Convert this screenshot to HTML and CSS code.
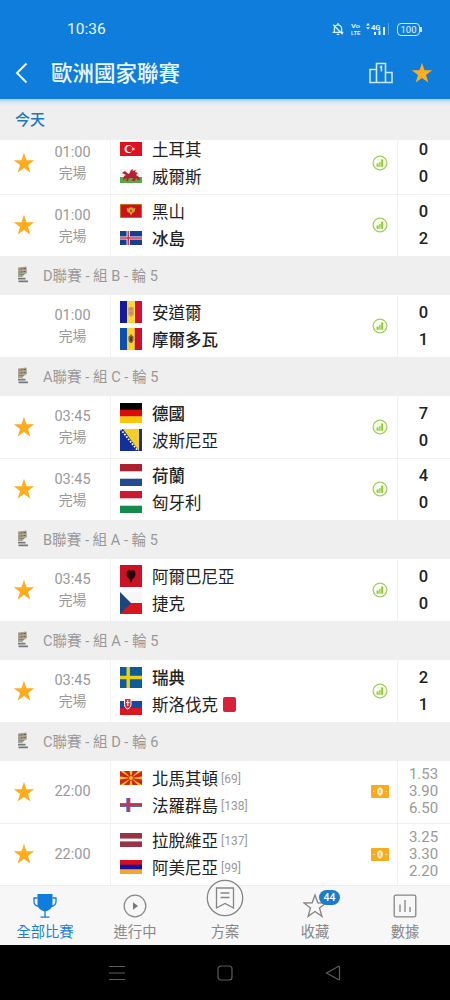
FILE: index.html
```html
<!DOCTYPE html>
<html lang="zh-Hant">
<head>
  <meta charset="utf-8">
  <title>歐洲國家聯賽</title>
  <link rel="stylesheet" href="styles.css">
</head>
<body>

  <!-- shared icons -->
  <svg class="defs" width="0" height="0">
    <symbol id="star" viewBox="0 0 22 22">
      <path fill="#ffad1c" d="M11 .8 13.5 8.2 21.2 8.3 15 13 17.3 20.6 11 16.1 4.7 20.6 7 13 .8 8.3 8.5 8.2z"/>
    </symbol>
    <symbol id="stats" viewBox="0 0 16 16">
      <circle cx="8" cy="8" r="6.9" fill="#f8ffe9" stroke="#a3c96a" stroke-width="1.3"/>
      <path d="M5.600 11.800V8.600M10.200 11.800V4.600" stroke="#8fc63a" stroke-width="2"/>
      <path d="M7.900 11.800V7" stroke="#8fc63a" stroke-width="1.300"/>
    </symbol>
    <symbol id="odds" viewBox="0 0 18 13">
      <rect width="18" height="13" rx="1" fill="#f8ab1d"/>
      <ellipse cx="9" cy="6.5" rx="2.9" ry="3.4" fill="#fff3d6"/>
      <path d="M9 2v9M2.2 6.5h1.3M14.5 6.5h1.3" stroke="#fff3d6" stroke-width="1.2"/>
      <path d="M9 4.6v3.8" stroke="#f8ab1d" stroke-width="1.2"/>
    </symbol>
    <symbol id="league" viewBox="0 0 12 17">
      <path fill="#a7a390" d="M1 1.5 9.5.5 10 7 6 9.5 5.5 11H1z"/>
      <path d="M2 3.2 9 2.4M2 6.2 8.5 5.4" stroke="#5f6259" stroke-width="1"/>
      <path d="M3 1.5v9M6 1v8" stroke="#d0a58c" stroke-width=".8"/>
      <path d="M2 8.6h5" stroke="#71917b" stroke-width="1.2"/>
      <path d="M1 12.6h7.5M1.5 15.4H11" stroke="#77777c" stroke-width="1.6"/>
    </symbol>
  </svg>

  <div class="top">
    <div class="status">
      <span class="clock">10:36</span>
      <svg class="bell" width="12" height="14" viewBox="0 0 12 14" fill="none" stroke="#d9f1ff" stroke-width="1.3">
        <path d="M2.400 10V6.500A3.600 3.600 0 0 1 9.600 6.500V10M.6 10.300h10.800M4.800 12.400h2.400M6 1v1.800M1.200 2.800l9.400 9.400"/>
      </svg>
      <svg class="volte" width="10" height="16" viewBox="0 0 10 16" fill="#e4f5ff">
        <text x="0" y="7" textLength="9" lengthAdjust="spacingAndGlyphs">Vo</text>
        <text x="0" y="14" textLength="9.500" lengthAdjust="spacingAndGlyphs">LTE</text>
      </svg>
      <svg class="signal" width="24" height="14" viewBox="0 0 24 14" fill="#e4f5ff">
        <path d="M0 3.400 2 1l2 2.400zM0 5.200h4L2 7.600zM8 10h2v3H8zM12.500 8.500h2V13h-2zM17 5h2v8h-2z"/>
        <path d="M22 1h1v12h-1z" opacity=".3"/>
        <text x="5" y="7.500" font-size="8" textLength="9.500" lengthAdjust="spacingAndGlyphs">4G</text>
      </svg>
      <span class="battery">100</span>
    </div>
    <div class="titlebar">
      <svg class="back" width="13" height="22" viewBox="0 0 13 22" fill="none" stroke="#eaf8ff" stroke-width="2">
        <path d="M11.500 1.500 2 11l9.500 9.500"/>
      </svg>
      <h1>歐洲國家聯賽</h1>
      <svg class="podium" width="24" height="22" viewBox="0 0 24 22" fill="none" stroke="#c9eaff" stroke-width="1.600">
        <path d="M7.500 20.500V1.500h9v19M7.500 7.500H1v13h22V10.500h-6.500M11 5.500l1.400-1V9.500"/>
      </svg>
      <svg class="fav" width="22" height="22"><use href="#star"/></svg>
    </div>
  </div>

  <div class="day">今天</div>

  <div class="list">
    <div class="match">
      <div class="star"><svg width="22" height="22"><use href="#star"/></svg></div>
      <div class="time">01:00<span>完場</span></div>
      <div class="teams">
        <div class="team">
          <svg width="22" height="14" viewBox="0 0 22 14"><rect width="22" height="14" fill="#e2101c"/><circle cx="8.500" cy="7" r="4" fill="#fff"/><circle cx="9.600" cy="7" r="3.100" fill="#e2101c"/><path fill="#fff" d="m11 7 1.500-.5.2-1.500.9 1.200 1.400-.4-.9 1.200.9 1.200-1.400-.4-.9 1.200-.2-1.500z"/></svg>
          <span>土耳其</span>
        </div>
        <div class="team">
          <svg width="22" height="14" viewBox="0 0 22 14"><path fill="#f4f4f4" d="M0 0h22v7H0z"/><path fill="#56a847" d="M0 8h22v6H0z"/><path fill="#b81f32" d="m2 4 3-2 2 2 2 1 2-4 2-1-.5 2L16 1l-1 2 3 1-2 2 3 2 1 3h-2l-2-2-1 3h-3l1-3-4 0-1 3H6l1-3-4 2 1-4 2-1z"/></svg>
          <span>威爾斯</span>
        </div>
      </div>
      <div class="info"><svg width="16" height="16"><use href="#stats"/></svg></div>
      <div class="score">0<br>0</div>
    </div>

    <div class="match">
      <div class="star"><svg width="22" height="22"><use href="#star"/></svg></div>
      <div class="time">01:00<span>完場</span></div>
      <div class="teams">
        <div class="team">
          <svg width="22" height="14" viewBox="0 0 22 14"><rect width="22" height="14" fill="#c8941c"/><rect x=".7" y=".7" width="20.600" height="12.600" fill="#cb1119"/><path fill="#d8a036" d="m6.500 4 2 .5L10 3l1 1 1-1 1.500 1.500 2-.5-1 4-2 .8L11 11.500 9.500 8.800 7.500 8z"/><path fill="#8c6a38" d="M10 5.500h2v2.500h-2z"/></svg>
          <span>黑山</span>
        </div>
        <div class="team win">
          <svg width="22" height="14" viewBox="0 0 22 14"><rect width="22" height="14" fill="#173f8f"/><path d="M8.200 0v14M0 7h22" stroke="#fff" stroke-width="3.200"/><path d="M8.200 0v14M0 7h22" stroke="#d72a3c" stroke-width="1.500"/></svg>
          <span>冰島</span>
        </div>
      </div>
      <div class="info"><svg width="16" height="16"><use href="#stats"/></svg></div>
      <div class="score">0<br>2</div>
    </div>

    <div class="group"><svg width="12" height="17"><use href="#league"/></svg>D聯賽 - 組 B - 輪 5</div>

    <div class="match">
      <div class="star"></div>
      <div class="time">01:00<span>完場</span></div>
      <div class="teams">
        <div class="team">
          <svg width="22" height="22" viewBox="0 0 22 22"><path fill="#151a9c" d="M0 0h7v22H0z"/><path fill="#fbd934" d="M7 0h8v22H7z"/><path fill="#d60f3a" d="M15 0h7v22h-7z"/><path fill="#d3a05a" d="M8.200 6.500 11 5.800l2.800.7v7.500L11 16l-2.800-2z"/><path d="M9.500 8h3M9.500 12h3" stroke="#c07a52"/></svg>
          <span>安道爾</span>
        </div>
        <div class="team win">
          <svg width="22" height="22" viewBox="0 0 22 22"><path fill="#0d4fae" d="M0 0h7.300v22H0z"/><path fill="#fad321" d="M7.300 0h7.400v22H7.300z"/><path fill="#cb1030" d="M14.700 0H22v22h-7.300z"/><path fill="#85602b" d="m11 6 1 1.500 1.500 1v4L12 15h-2l-1.500-2.500v-4l1.500-1z"/><path fill="#503d28" d="M10 9h2v4h-2z"/></svg>
          <span>摩爾多瓦</span>
        </div>
      </div>
      <div class="info"><svg width="16" height="16"><use href="#stats"/></svg></div>
      <div class="score">0<br>1</div>
    </div>

    <div class="group"><svg width="12" height="17"><use href="#league"/></svg>A聯賽 - 組 C - 輪 5</div>

    <div class="match">
      <div class="star"><svg width="22" height="22"><use href="#star"/></svg></div>
      <div class="time">03:45<span>完場</span></div>
      <div class="teams">
        <div class="team win">
          <svg width="22" height="20" viewBox="0 0 22 20"><path d="M0 0h22v7H0z"/><path fill="#dc0b08" d="M0 6.700h22v7H0z"/><path fill="#fac80a" d="M0 13.400h22V20H0z"/></svg>
          <span>德國</span>
        </div>
        <div class="team">
          <svg width="22" height="22" viewBox="0 0 22 22"><rect width="22" height="22" fill="#11309a"/><path fill="#f6cf24" d="M3 0h16v22z"/><path d="m.5 0 17.500 22" stroke="#fff" stroke-width="1.700" stroke-dasharray="1.700 1.400"/></svg>
          <span>波斯尼亞</span>
        </div>
      </div>
      <div class="info"><svg width="16" height="16"><use href="#stats"/></svg></div>
      <div class="score">7<br>0</div>
    </div>

    <div class="match">
      <div class="star"><svg width="22" height="22"><use href="#star"/></svg></div>
      <div class="time">03:45<span>完場</span></div>
      <div class="teams">
        <div class="team win">
          <svg width="22" height="22" viewBox="0 0 22 22"><path fill="#fff" d="M0 0h22v22H0z"/><path fill="#aa222d" d="M0 0h22v7.300H0z"/><path fill="#224a91" d="M0 14.700h22V22H0z"/></svg>
          <span>荷蘭</span>
        </div>
        <div class="team">
          <svg width="22" height="22" viewBox="0 0 22 22"><path fill="#fff" d="M0 0h22v22H0z"/><path fill="#ce1730" d="M0 0h22v7.300H0z"/><path fill="#148a4c" d="M0 14.700h22V22H0z"/></svg>
          <span>匈牙利</span>
        </div>
      </div>
      <div class="info"><svg width="16" height="16"><use href="#stats"/></svg></div>
      <div class="score">4<br>0</div>
    </div>

    <div class="group"><svg width="12" height="17"><use href="#league"/></svg>B聯賽 - 組 A - 輪 5</div>

    <div class="match">
      <div class="star"><svg width="22" height="22"><use href="#star"/></svg></div>
      <div class="time">03:45<span>完場</span></div>
      <div class="teams">
        <div class="team">
          <svg width="22" height="22" viewBox="0 0 22 22"><rect width="22" height="22" fill="#cc1026"/><path fill="#250507" d="m7 6 2.500-1L11 6l1.500-1L15 6l.5 4-1.500 3-1.500 1L11 18l-1.500-4L8 13l-1.500-3z"/></svg>
          <span>阿爾巴尼亞</span>
        </div>
        <div class="team">
          <svg width="22" height="22" viewBox="0 0 22 22"><path fill="#f7f7f7" d="M0 0h22v11H0z"/><path fill="#d9161f" d="M0 11h22v11H0z"/><path fill="#1c477c" d="m0 0 11 11L0 22z"/></svg>
          <span>捷克</span>
        </div>
      </div>
      <div class="info"><svg width="16" height="16"><use href="#stats"/></svg></div>
      <div class="score">0<br>0</div>
    </div>

    <div class="group"><svg width="12" height="17"><use href="#league"/></svg>C聯賽 - 組 A - 輪 5</div>

    <div class="match">
      <div class="star"><svg width="22" height="22"><use href="#star"/></svg></div>
      <div class="time">03:45<span>完場</span></div>
      <div class="teams">
        <div class="team win">
          <svg width="22" height="21" viewBox="0 0 22 21"><rect width="22" height="21" fill="#0d5b97"/><path d="M8.200 0v21M0 10.500h22" stroke="#e8d01d" stroke-width="3.400"/></svg>
          <span>瑞典</span>
        </div>
        <div class="team">
          <svg class="low" width="22" height="17" viewBox="0 0 22 17"><path fill="#f5f5f5" d="M0 0h22v6H0z"/><path fill="#154a9e" d="M0 3h22v7.500H0z"/><path fill="#db1522" d="M0 10h22v7H0z"/><path fill="#dc2b3b" stroke="#fff" d="M4.500.5h6.500v6c0 2.500-1.500 3.800-3.200 4.500C6 10.300 4.500 9 4.500 6.500z"/><path d="M7.800 2v6M6.200 4.500h3.200" stroke="#fff"/></svg>
          <span>斯洛伐克</span><i class="redcard"></i>
        </div>
      </div>
      <div class="info"><svg width="16" height="16"><use href="#stats"/></svg></div>
      <div class="score">2<br>1</div>
    </div>

    <div class="group"><svg width="12" height="17"><use href="#league"/></svg>C聯賽 - 組 D - 輪 6</div>

    <div class="match">
      <div class="star"><svg width="22" height="22"><use href="#star"/></svg></div>
      <div class="time">22:00</div>
      <div class="teams">
        <div class="team">
          <svg width="22" height="14" viewBox="0 0 22 14"><rect width="22" height="14" fill="#cf2317"/><path fill="#f6bd2b" d="M9.500 0h3L11 7zM9.500 14h3L11 7zM0 5.500v3L11 7zM22 5.500v3L11 7zM0 0h4l7 7zM22 0h-4l-7 7zM0 14h4l7-7zM22 14h-4l-7-7z"/><circle cx="11" cy="7" r="2.500" fill="#f6bd2b" stroke="#cf2317" stroke-width=".8"/></svg>
          <span>北馬其頓</span><small>[69]</small>
        </div>
        <div class="team">
          <svg width="22" height="14" viewBox="0 0 22 14"><rect width="22" height="14" fill="#fafafa"/><path d="M8.300 0v14M0 7h22" stroke="#5a6bab" stroke-width="4"/><path d="M8.300 0v14M0 7h22" stroke="#c43452" stroke-width="2"/></svg>
          <span>法羅群島</span><small>[138]</small>
        </div>
      </div>
      <div class="info"><svg width="18" height="13"><use href="#odds"/></svg></div>
      <div class="score rates">1.53<br>3.90<br>6.50</div>
    </div>

    <div class="match">
      <div class="star"><svg width="22" height="22"><use href="#star"/></svg></div>
      <div class="time">22:00</div>
      <div class="teams">
        <div class="team">
          <svg width="22" height="14" viewBox="0 0 22 14"><rect width="22" height="14" fill="#993343"/><path fill="#fff" d="M0 5.600h22v2.800H0z"/></svg>
          <span>拉脫維亞</span><small>[137]</small>
        </div>
        <div class="team">
          <svg width="22" height="14" viewBox="0 0 22 14"><path fill="#d80d1b" d="M0 0h22v5H0z"/><path fill="#1a0f9c" d="M0 4.700h22v5H0z"/><path fill="#f2a82a" d="M0 9.400h22V14H0z"/></svg>
          <span>阿美尼亞</span><small>[99]</small>
        </div>
      </div>
      <div class="info"><svg width="18" height="13"><use href="#odds"/></svg></div>
      <div class="score rates">3.25<br>3.30<br>2.20</div>
    </div>
  </div>

  <div class="tabs">
    <div class="tab active">
      <svg width="24" height="26" viewBox="0 0 24 26">
        <path fill="#0f7ddb" d="M4.500 1h15v10c0 4-3.200 6.500-7.500 7.500C7.700 17.500 4.500 15 4.500 11z"/>
        <path fill="none" stroke="#0f7ddb" stroke-width="1.300" d="M4.500 5H1v3.500C1 11.500 3 13 6 13.500M19.500 5H23v3.500c0 3-2 4.500-5 5M12 18v6M7.500 24.200h9"/>
      </svg>
      <span>全部比賽</span>
    </div>
    <div class="tab">
      <svg width="24" height="26" viewBox="0 0 24 26">
        <circle cx="12" cy="13" r="10.800" fill="none" stroke="#8a8a8a" stroke-width="1.300"/>
        <path fill="#777" d="m10 9.300 5 3.700-5 3.700z"/>
      </svg>
      <span>進行中</span>
    </div>
    <div class="tab plan">
      <svg width="38" height="38" viewBox="0 0 38 38" fill="none" stroke="#858585" stroke-width="1.300">
        <circle cx="19" cy="19" r="17.700" fill="#f8f8f8"/>
        <path d="M10.500 9h17v20l-8.500-4.500-8.500 4.500zM14.500 14h9M14.500 18.500h9"/>
      </svg>
      <span>方案</span>
    </div>
    <div class="tab">
      <svg width="24" height="26" viewBox="0 0 24 26" fill="none" stroke="#858585" stroke-width="1.300">
        <path d="m12 2 2.800 7.800 8.200.2-6.500 5 2.400 8.300L12 18.500l-6.900 4.800L7.500 15 1 10l8.200-.2z"/>
      </svg>
      <b class="badge">44</b>
      <span>收藏</span>
    </div>
    <div class="tab">
      <svg width="24" height="26" viewBox="0 0 24 26" fill="none" stroke="#858585" stroke-width="1.300">
        <rect x="1.200" y="2.200" width="21.600" height="21.600" rx="1.500"/>
        <path d="M7 11.500V19M12 7v12M17 14v5"/>
      </svg>
      <span>數據</span>
    </div>
  </div>

  <div class="sysbar">
    <svg width="16" height="16" viewBox="0 0 16 16"><path d="M0 1.500h16M0 8h16M0 14.500h16"/></svg>
    <svg width="16" height="16" viewBox="0 0 16 16"><rect x="1" y="1" width="14" height="14" rx="3"/></svg>
    <svg width="16" height="16" viewBox="0 0 16 16"><path d="M14.500 1.800v12.400q0 .8-.8.500L1.500 8l12.200-6.700q.8-.3.800.5z"/></svg>
  </div>

</body>
</html>
```

FILE: styles.css
```css
* {
  box-sizing: border-box;
}
body {
  margin: 0;
  width: 450px;
  height: 1000px;
  overflow: hidden;
  display: flex;
  flex-direction: column;
  background: #fff;
  font-family: Roboto, "Noto Sans CJK TC", sans-serif;
  color: #222;
}
svg {
  display: block;
  flex: none;
}
.defs {
  position: absolute;
}

/* header */
.top {
  height: 99px;
  flex: none;
  background: #0f7ddb;
  color: #e8f7ff;
}
.status {
  height: 58px;
  display: flex;
  align-items: center;
  padding: 0 30px 0 67px;
}
.clock {
  flex: 1;
  font-size: 15.5px;
}
.volte {
  margin-left: 7px;
  font: bold 6px "Liberation Sans", sans-serif;
}
.signal {
  margin-left: 5px;
  font-family: Roboto, sans-serif;
  font-weight: bold;
}
.battery {
  position: relative;
  margin-left: 7px;
  width: 23px;
  height: 13px;
  border: 1px solid #c9eaff;
  border-radius: 4px;
  font-size: 9.5px;
  line-height: 11.5px;
  text-align: center;
}
.battery::after {
  content: "";
  position: absolute;
  right: -3px;
  top: 3px;
  width: 2px;
  height: 5px;
  background: #c9eaff;
}
.titlebar {
  height: 30px;
  display: flex;
  align-items: center;
  padding: 0 17px 0 15px;
}
h1 {
  flex: 1;
  margin: 2px 0 0 23px;
  font-size: 21.5px;
  line-height: 30px;
  font-weight: 500;
}
.fav {
  margin-left: 18px;
}
.day {
  height: 41px;
  flex: none;
  padding-left: 15px;
  background: linear-gradient(#9fcbf0, #d5e6f4 3px, #efefef 7px);
  color: #1d77be;
  font-size: 15px;
  line-height: 42px;
  font-weight: 500;
}

/* match list */
.list {
  height: 745px;
  flex: none;
  overflow: hidden;
  display: flex;
  flex-direction: column;
  justify-content: flex-end;
}
.match {
  height: 62px;
  flex: none;
  display: grid;
  grid-template-columns: 48px 62px 253px 34px 53px;
}
.match + .match {
  border-top: 1px solid #f0f0f0;
}
.star, .info {
  display: flex;
  align-items: center;
  justify-content: center;
  padding-bottom: 1px;
}
.time {
  display: flex;
  flex-direction: column;
  align-items: center;
  justify-content: center;
  padding: 0 13px 0 0;
  font-size: 14.5px;
  line-height: 20px;
  color: #999;
}
.time span {
  font-size: 13.8px;
}
.teams {
  border-left: 1px solid #f2f2f2;
  padding: 4px 0 0 9px;
}
.match + .match .teams, .match + .match .score {
  padding-top: 3px;
}
.team {
  height: 27px;
  display: flex;
  align-items: center;
  font-size: 16.5px;
  line-height: 27px;
}
.team svg {
  margin-top: -1px;
}
.team span {
  margin: 2px 0 0 10px;
}
.win {
  font-weight: 500;
}
.team .low {
  margin-top: 3px;
}
small {
  margin: 1px 0 0 3px;
  font-size: 12px;
  color: #999;
}
.redcard {
  margin-left: 5px;
  width: 13px;
  height: 15px;
  border-radius: 2px;
  background: #d8203a;
}
.score {
  border-left: 1px solid #f2f2f2;
  padding: 4px 1px 0 0;
  font-size: 16.5px;
  line-height: 27px;
  font-weight: 500;
  text-align: center;
}
.match .score.rates {
  padding: 5px 1px 0 0;
  font-size: 15px;
  line-height: 17px;
  font-weight: 400;
  color: #999;
}
.group {
  height: 39px;
  flex: none;
  display: flex;
  align-items: center;
  gap: 14px;
  padding: 0 0 2px 17px;
  background: #efefef;
  color: #999;
  font-size: 14.6px;
}

/* bottom tabs */
.tabs {
  height: 60px;
  flex: none;
  display: flex;
  background: #f7f7f7;
  border-top: 1px solid #ececec;
}
.tab {
  position: relative;
  flex: 1;
  display: flex;
  flex-direction: column;
  align-items: center;
  justify-content: flex-end;
  padding-bottom: 2px;
  font-size: 14.3px;
  line-height: 22px;
  color: #888;
}
.tab svg {
  margin-bottom: 2px;
}
.active {
  color: #1a80d4;
}
.plan svg {
  margin-bottom: 4px;
}
.badge {
  position: absolute;
  left: 49px;
  top: 4px;
  width: 21px;
  height: 15px;
  border-radius: 8px;
  background: #1b7ccc;
  color: #fff;
  font-size: 10.5px;
  line-height: 15px;
  font-weight: 500;
  text-align: center;
}

.sysbar {
  height: 55px;
  flex: none;
  display: flex;
  align-items: center;
  justify-content: center;
  gap: 92px;
  background: #000;
}
.sysbar svg {
  fill: none;
  stroke: #5c5c5c;
  stroke-width: 1.2;
}
```
